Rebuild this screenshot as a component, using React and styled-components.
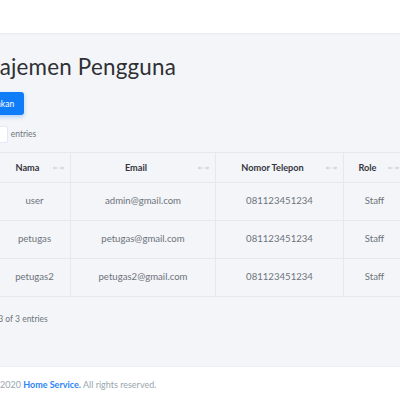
import styled, { createGlobalStyle } from "styled-components";

const GlobalStyle = createGlobalStyle`
  html, body {
    margin: 0;
    padding: 0;
    width: 400px;
    height: 400px;
    overflow: hidden;
    background: #ffffff;
    font-family: Lato, "Open Sans", sans-serif;
  }
`;

const users = [
  { no: 1, nama: "user", email: "admin@gmail.com", telp: "081123451234", role: "Staff" },
  { no: 2, nama: "petugas", email: "petugas@gmail.com", telp: "081123451234", role: "Staff" },
  { no: 3, nama: "petugas2", email: "petugas2@gmail.com", telp: "081123451234", role: "Staff" },
];

function SortIcon() {
  return (
    <svg width="11" height="6" viewBox="0 0 11 6" fill="none" stroke="#c4c8d0" strokeWidth="0.9">
      <path d="M0.5 3h4M1.8 1.7L0.5 3l1.3 1.3" />
      <path d="M6.5 3h4M9.2 1.7L10.5 3 9.2 4.3" />
    </svg>
  );
}

export default function App() {
  return (
    <Page>
      <GlobalStyle />
      <Navbar />
      <Main>
        <Content>
          <Title>Manajemen Pengguna</Title>
          <AddButton>Tambahkan</AddButton>
          <LengthRow>
            <span>Show</span>
            <SelectBox>10</SelectBox>
            <span>entries</span>
          </LengthRow>
          <Table>
            <colgroup>
              <col style={{ width: 36 }} />
              <col style={{ width: 72 }} />
              <col style={{ width: 145 }} />
              <col style={{ width: 128 }} />
              <col style={{ width: 62 }} />
              <col style={{ width: 80 }} />
            </colgroup>
            <thead>
              <tr>
                {["No", "Nama", "Email", "Nomor Telepon", "Role", "Aksi"].map((h) => (
                  <Th key={h}>
                    {h}
                    <IconSlot>
                      <SortIcon />
                    </IconSlot>
                  </Th>
                ))}
              </tr>
            </thead>
            <tbody>
              {users.map((u) => (
                <tr key={u.no}>
                  <Td>{u.no}</Td>
                  <Td>{u.nama}</Td>
                  <Td>{u.email}</Td>
                  <Td>{u.telp}</Td>
                  <Td>{u.role}</Td>
                  <Td>Edit</Td>
                </tr>
              ))}
            </tbody>
          </Table>
          <Info>Showing 1 to 3 of 3 entries</Info>
        </Content>
      </Main>
      <Footer>
        Copyright &copy; 2020 <FooterLink>Home Service.</FooterLink> All rights reserved.
      </Footer>
    </Page>
  );
}

const Page = styled.div`
  width: 400px;
  height: 400px;
  display: flex;
  flex-direction: column;
  overflow: hidden;
`;

const Navbar = styled.div`
  height: 33px;
  flex-shrink: 0;
  background: #ffffff;
  box-shadow: 0 1px 2px rgba(0, 0, 0, 0.05);
  position: relative;
  z-index: 1;
`;

const Main = styled.div`
  height: 333px;
  flex-shrink: 0;
  background: #f4f5f8;
  overflow: hidden;
`;

const Content = styled.div`
  margin-left: -38px;
  width: 560px;
  padding-top: 19px;
`;

const Title = styled.h1`
  margin: 0 0 0 -7px;
  font-size: 22.4px;
  font-weight: 400;
  line-height: 29px;
  color: #2e3036;
  letter-spacing: 0.2px;
`;

const AddButton = styled.button`
  margin-top: 11px;
  height: 23px;
  width: 62px;
  border: none;
  border-radius: 3px;
  background: #0f7cf8;
  color: #ffffff;
  font-family: inherit;
  font-size: 8.5px;
  padding: 0;
  box-shadow: 0 2px 4px rgba(15, 124, 248, 0.3);
`;

const LengthRow = styled.div`
  margin-top: 10px;
  margin-left: -6px;
  display: flex;
  align-items: center;
  gap: 3px;
  font-size: 8.5px;
  color: #6c757d;
  height: 18px;
`;

const SelectBox = styled.div`
  width: 28px;
  height: 17px;
  background: #ffffff;
  border: 1px solid #e4e6fc;
  border-radius: 2px;
  font-size: 8px;
  line-height: 16px;
  padding-left: 4px;
  box-sizing: border-box;
`;

const Table = styled.table`
  margin-top: 9px;
  table-layout: fixed;
  border-collapse: collapse;
  width: 523px;
  font-size: 9.6px;
  color: #6c737b;
`;

const Th = styled.th`
  height: 30px;
  padding: 0 14px 0 0;
  box-sizing: border-box;
  position: relative;
  text-align: center;
  font-size: 9.2px;
  font-weight: 700;
  color: #34363e;
  border: 1px solid #e6e8ee;
`;

const IconSlot = styled.span`
  position: absolute;
  right: 6px;
  top: 12px;
  display: flex;
`;

const Td = styled.td`
  height: 34px;
  padding: 0 0 3px;
  text-align: center;
  border: 1px solid #e6e8ee;
`;

const Info = styled.div`
  margin-top: 17px;
  margin-left: -15px;
  font-size: 8.5px;
  color: #6c757d;
`;

const Footer = styled.div`
  flex: 1;
  background: #ffffff;
  border-top: 1px solid #eceef2;
  margin-left: -51px;
  padding-top: 12px;
  font-size: 9px;
  color: #98a6ad;
  white-space: nowrap;
`;

const FooterLink = styled.span`
  color: #2a84f5;
  font-weight: 700;
`;
